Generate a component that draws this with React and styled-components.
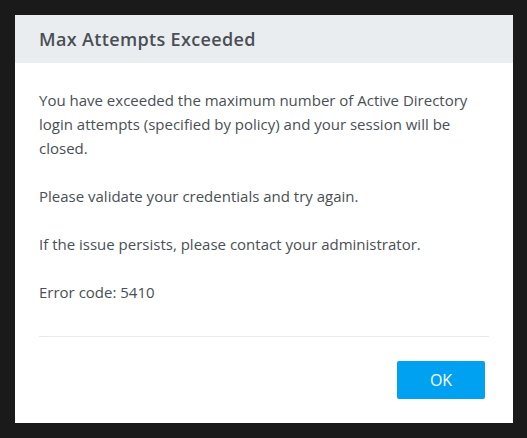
import styled, { createGlobalStyle } from "styled-components";

const GlobalStyle = createGlobalStyle`
  html, body {
    margin: 0;
    padding: 0;
    background: #1a1a1a;
  }
  body {
    font-family: "Open Sans", "Liberation Sans", sans-serif;
    -webkit-font-smoothing: antialiased;
  }
`;

function App() {
  return (
    <Page>
      <GlobalStyle />
      <Dialog>
        <Header>
          <Title>Max Attempts Exceeded</Title>
        </Header>
        <Body>
          <Text>
            You have exceeded the maximum number of Active Directory login
            attempts (specified by policy) and your session will be closed.
          </Text>
          <Text>Please validate your credentials and try again.</Text>
          <Text>If the issue persists, please contact your administrator.</Text>
          <Text>Error code: 5410</Text>
        </Body>
        <Footer>
          <OkButton>OK</OkButton>
        </Footer>
      </Dialog>
    </Page>
  );
}

export default App;

const Page = styled.div`
  width: 527px;
  height: 438px;
  padding: 15px 14px 15px 15px;
  box-sizing: border-box;
  background: #1a1a1a;
`;

const Dialog = styled.div`
  width: 498px;
  height: 408px;
  background: #ffffff;
  display: flex;
  flex-direction: column;
`;

const Header = styled.div`
  height: 48px;
  background: #eaedf0;
  display: flex;
  align-items: center;
  padding: 0 24px;
`;

const Title = styled.h2`
  margin: 0;
  font-size: 18px;
  font-weight: 600;
  color: #4a4f55;
  letter-spacing: 0.35px;
`;

const Body = styled.div`
  margin: 0 24px;
  padding: 25px 0 32px;
  border-bottom: 1px solid #e6eaee;
`;

const Text = styled.p`
  margin: 0 0 24px;
  font-size: 15px;
  line-height: 24px;
  color: #4a4f55;

  &:last-child {
    margin-bottom: 0;
  }
`;

const Footer = styled.div`
  display: flex;
  justify-content: flex-end;
  padding: 24px 28px 0 24px;
`;

const OkButton = styled.button`
  width: 88px;
  height: 38px;
  border: none;
  border-radius: 2px;
  background: #00a1f1;
  color: #ffffff;
  font-family: inherit;
  font-size: 16px;
  cursor: pointer;
`;
